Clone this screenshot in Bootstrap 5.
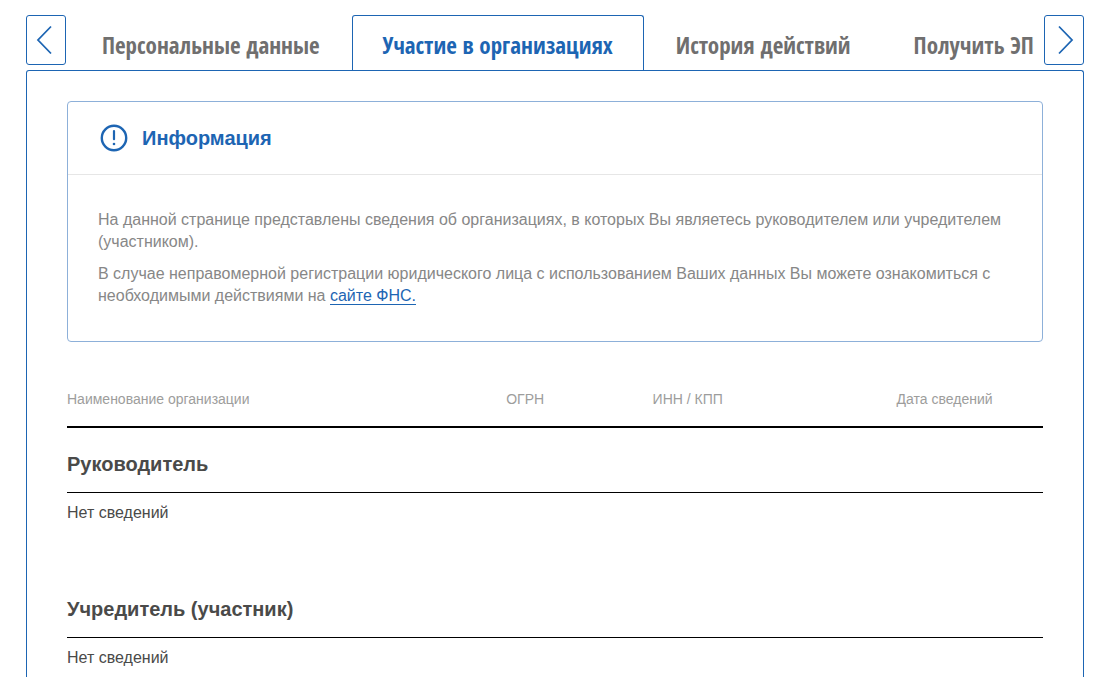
<!DOCTYPE html>
<html lang="ru">
<head>
<meta charset="utf-8">
<meta name="viewport" content="width=device-width, initial-scale=1">
<title>Участие в организациях</title>
<link href="https://cdn.jsdelivr.net/npm/bootstrap@5.3.0/dist/css/bootstrap.min.css" rel="stylesheet">
<style>
  :root { --brand: #1d65b3; }
  body {
    font-family: "Liberation Sans", Arial, sans-serif;
    font-size: 16px;
    line-height: 24px;
    color: #4a4a49;
    background: #fff;
  }
  .page-wrap { padding: 15px 30px 0 26px; }

  .tab-bar { height: 55px; }
  .arrow-btn {
    width: 40px;
    height: 50px;
    border: 1px solid var(--brand);
    border-radius: 3px;
    background: #fff;
    color: var(--brand);
  }
  .tab-strip { margin: 0 5px; gap: 1px; }
  .tab-strip .nav-link {
    height: 55px;
    padding: 13px 30px 0;
    border: 1px solid transparent;
    border-bottom: 0;
    border-radius: 3px 3px 0 0;
    font-family: "Open Sans Condensed", "Roboto Condensed", sans-serif;
    font-weight: 700;
    font-size: 23px;
    line-height: 32px;
    white-space: nowrap;
    color: #706f6f;
  }
  .tab-strip .nav-link.active { border-color: var(--brand); color: var(--brand); }

  .panel {
    border: 1px solid var(--brand);
    border-bottom: 0;
    border-radius: 3px 3px 0 0;
    padding: 30px 40px 0;
  }

  .info-box { border: 1px solid #8db0d9; border-radius: 4px; margin-bottom: 47px; }
  .info-box .card-header {
    padding: 22px 32px;
    gap: 14px;
    background: none;
    border-bottom: 1px solid #e6e6e6;
    color: var(--brand);
  }
  .info-box h2 { font-size: 20px; line-height: 28px; font-weight: 700; }
  .info-box .card-body { padding: 34px 30px 24px; line-height: 22px; color: #878787; }
  .info-box p { margin-bottom: 10px; }
  .info-box a { color: var(--brand); text-decoration: none; border-bottom: 1px solid var(--brand); }

  .org-table { width: 100%; table-layout: fixed; border-collapse: separate; border-spacing: 0; }
  .org-table thead th {
    padding: 0 0 17px;
    font-size: 14px;
    line-height: 20px;
    font-weight: 400;
    color: #9d9d9c;
    border-bottom: 2px solid #000;
  }
  .org-table tbody th {
    padding: 22px 0 14px;
    font-size: 20px;
    line-height: 28px;
    border-bottom: 1px solid #000;
  }
  .org-table td { padding: 8px 0 48px; }
  .org-table tbody:last-child td { padding-bottom: 7px; }
  .col-name { width: 45%; }
  .col-ogrn { width: 15%; }
  .col-inn { width: 25%; }
</style>
</head>
<body>
<div class="page-wrap">
  <div class="tab-bar d-flex align-items-start">
    <button type="button" class="arrow-btn flex-shrink-0 d-flex align-items-center justify-content-center p-0" aria-label="Назад">
      <svg width="38" height="48" viewBox="0 0 38 48" fill="none" stroke="currentColor" stroke-width="1.8" aria-hidden="true"><path d="M24 10.500 11 24 24 37.500"/></svg>
    </button>
    <ul class="tab-strip nav flex-nowrap flex-grow-1 overflow-hidden">
      <li class="nav-item"><a class="nav-link" href="#">Персональные данные</a></li>
      <li class="nav-item"><a class="nav-link active" aria-current="page" href="#">Участие в организациях</a></li>
      <li class="nav-item"><a class="nav-link" href="#">История действий</a></li>
      <li class="nav-item"><a class="nav-link" href="#">Получить ЭП</a></li>
    </ul>
    <button type="button" class="arrow-btn flex-shrink-0 d-flex align-items-center justify-content-center p-0" aria-label="Вперёд">
      <svg width="38" height="48" viewBox="0 0 38 48" fill="none" stroke="currentColor" stroke-width="1.8" aria-hidden="true"><path d="M14 10.500 27 24 14 37.500"/></svg>
    </button>
  </div>

  <main class="panel">
    <section class="info-box card">
      <div class="card-header d-flex align-items-center">
        <svg class="flex-shrink-0" width="28" height="28" viewBox="0 0 28 28" fill="none" stroke="currentColor" aria-hidden="true">
          <circle cx="14" cy="14" r="12.2" stroke-width="2.4"/>
          <path d="M14 7v8.200" stroke-width="2.200" stroke-linecap="round"/>
          <circle cx="14" cy="20" r="1.300" fill="currentColor" stroke="none"/>
        </svg>
        <h2 class="mb-0">Информация</h2>
      </div>
      <div class="card-body">
        <p>На данной странице представлены сведения об организациях, в которых Вы являетесь руководителем или учредителем (участником).</p>
        <p>В случае неправомерной регистрации юридического лица с использованием Ваших данных Вы можете ознакомиться с необходимыми действиями на <a href="#">сайте ФНС.</a></p>
      </div>
    </section>

    <table class="org-table">
      <thead>
        <tr>
          <th scope="col" class="col-name">Наименование организации</th>
          <th scope="col" class="col-ogrn">ОГРН</th>
          <th scope="col" class="col-inn">ИНН / КПП</th>
          <th scope="col">Дата сведений</th>
        </tr>
      </thead>
      <tbody>
        <tr><th scope="rowgroup" colspan="4">Руководитель</th></tr>
        <tr><td colspan="4">Нет сведений</td></tr>
      </tbody>
      <tbody>
        <tr><th scope="rowgroup" colspan="4">Учредитель (участник)</th></tr>
        <tr><td colspan="4">Нет сведений</td></tr>
      </tbody>
    </table>
  </main>
</div>
<script src="https://cdn.jsdelivr.net/npm/bootstrap@5.3.0/dist/js/bootstrap.bundle.min.js"></script>
</body>
</html>
